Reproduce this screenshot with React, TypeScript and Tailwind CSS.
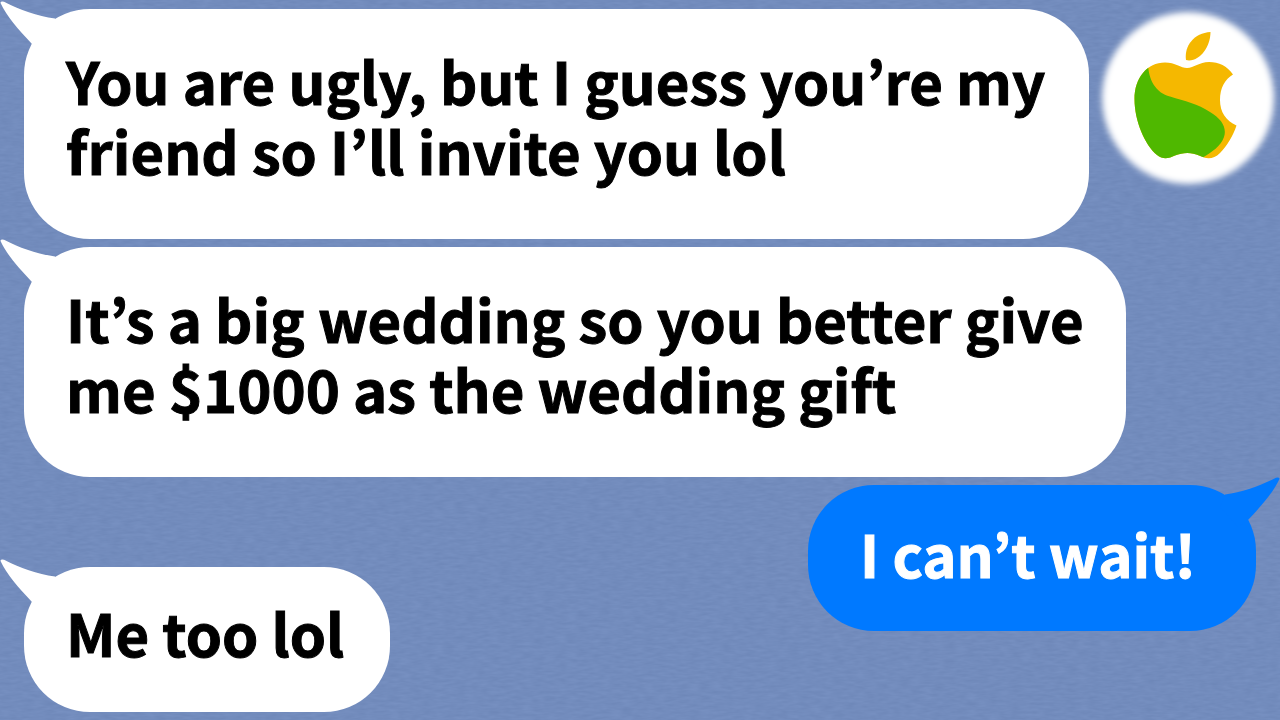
import clsx from "clsx";

type Message = {
  text: string;
  className: string;
};

const invite: Message = {
  text: "You are ugly, but I guess you’re my\nfriend so I’ll invite you lol",
  className: "pt-9 pr-11 pb-[54px] pl-[42px]",
};

const gift: Message = {
  text: "It’s a big wedding so you better give\nme $1000 as the wedding gift",
  className: "pt-9 pr-[42px] pb-[54px] pl-[42px]",
};

const reply: Message = {
  text: "I can’t wait!",
  className: "pt-[33px] pr-[60px] pb-[43px] pl-[52px]",
};

const closing: Message = {
  text: "Me too lol",
  className: "pt-[30px] pr-[46px] pb-[45px] pl-[42px]",
};

function Bubble({ message, mine = false }: { message: Message; mine?: boolean }) {
  return (
    <article
      className={clsx(
        "relative w-fit rounded-[66px] text-[58px] leading-[70px] font-bold [-webkit-text-stroke:1px]",
        mine ? "bg-[#0079ff] text-white" : "bg-white text-black",
        message.className
      )}
    >
      <svg
        viewBox="0 0 60 50"
        aria-hidden="true"
        className={clsx(
          "absolute -top-2 h-[50px] w-[60px]",
          mine ? "-right-6 -scale-x-100 fill-[#0079ff]" : "-left-6 fill-white"
        )}
      >
        <path d="M.4 1.8Q1 -.2 4 .7C20 9 37 15 55 17.4L60 30L42 50L31.5 42.5C18 28 7 16 .4 1.8Z" />
      </svg>
      <p className="whitespace-pre">{message.text}</p>
    </article>
  );
}

function Avatar() {
  return (
    <svg
      viewBox="0 0 190 190"
      role="img"
      aria-label="Apple avatar"
      className="h-[190px] w-[190px] shrink-0"
    >
      <defs>
        <filter id="soft" x="-10%" y="-10%" width="120%" height="120%">
          <feGaussianBlur stdDeviation="3" />
        </filter>
        <clipPath id="apple">
          <path d="M97 68C91 68 85 62.5 75 62.5C57 62.5 44.500 78 44.500 99C44.500 121 55 145 67 155C73 160 79 158.500 85 155.500C93 152 102 152 109 155.500C116 159 123 160 130 153C137 146 143 136 146.500 125.500C136 121 130 112 130 100C130 88 135 79 143 74.500C137 66 129 62 119 62C109 62 104 68 97 68Z" />
        </clipPath>
      </defs>
      <circle cx="98" cy="98" r="86" fill="#fff" filter="url(#soft)" />
      <path
        d="M96 60C94 46 104 33 120.500 32C120.500 46 111 60 99 60.500Z"
        fill="#f5b800"
      />
      <g clipPath="url(#apple)">
        <rect x="40" y="58" width="112" height="106" fill="#f5b800" />
        <path
          d="M58 62C58 80 66 93 80 96.500C95 101 108 104 120 112C132 119 137 128 134 137C131 146 122 152 112 158L104 164H40V62Z"
          fill="#4fb800"
        />
      </g>
    </svg>
  );
}

function Wallpaper() {
  return (
    <svg aria-hidden="true" className="absolute inset-0 -z-10 h-full w-full">
      <filter id="grain" x="0" y="0" width="100%" height="100%" colorInterpolationFilters="sRGB">
        <feTurbulence type="fractalNoise" baseFrequency="0.09 0.35" numOctaves="2" seed="4" />
        <feColorMatrix values="0.05 0 0 0 0.424  0.05 0 0 0 0.523  0.05 0 0 0 0.715  0 0 0 0 1" />
      </filter>
      <rect width="100%" height="100%" filter="url(#grain)" />
    </svg>
  );
}

export default function App() {
  return (
    <main className="relative isolate flex min-h-screen flex-col gap-2 overflow-hidden bg-[#738cbd] px-6 font-['Noto_Sans_CJK_JP','Noto_Sans',sans-serif]">
      <Wallpaper />
      <div className="-mr-6 flex items-start justify-between">
        <div className="pt-[9px]">
          <Bubble message={invite} />
        </div>
        <Avatar />
      </div>
      <Bubble message={gift} />
      <div className="flex justify-end">
        <Bubble message={reply} mine />
      </div>
      <div className="-mt-[72px]">
        <Bubble message={closing} />
      </div>
    </main>
  );
}
